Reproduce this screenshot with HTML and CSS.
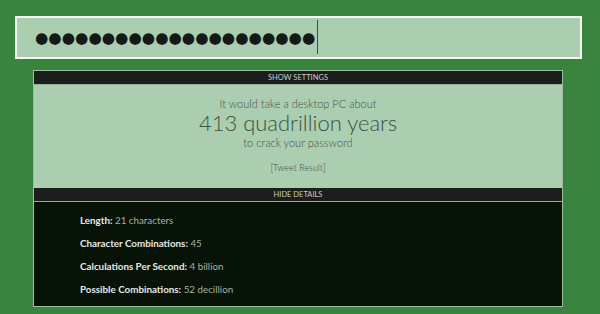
FILE: index.html
```html
<!DOCTYPE html>
<html lang="en">
<head>
  <meta charset="UTF-8">
  <meta name="viewport" content="width=device-width, initial-scale=1.0">
  <title>How Secure Is My Password?</title>
  <link rel="stylesheet" href="styles.css">
</head>
<body>
  <div class="password-box">
    <span class="dots">●●●●●●●●●●●●●●●●●●●●●</span><span class="caret"></span>
  </div>

  <div class="results">
    <div class="bar">Show Settings</div>

    <div class="summary">
      <p class="lead">It would take a desktop PC about</p>
      <p class="time">413 quadrillion years</p>
      <p class="lead">to crack your password</p>
      <p class="tweet">[Tweet Result]</p>
    </div>

    <div class="bar">Hide Details</div>

    <ul class="details">
      <li><strong>Length:</strong> 21 characters</li>
      <li><strong>Character Combinations:</strong> 45</li>
      <li><strong>Calculations Per Second:</strong> 4 billion</li>
      <li><strong>Possible Combinations:</strong> 52 decillion</li>
    </ul>
  </div>
</body>
</html>
```

FILE: styles.css
```css
body {
  margin: 0;
  background-color: #3a8440;
  font-family: 'Lato', 'Open Sans', sans-serif;
}

.password-box {
  display: flex;
  align-items: center;
  width: 563px;
  height: 39px;
  margin: 16px 0 0 15px;
  border: 2px solid #f4f8f4;
  background-color: #abcdb0;
}

.dots {
  margin: 3px 0 0 18px;
  font-family: 'DejaVu Sans', sans-serif;
  font-size: 15.3px;
  line-height: 1;
  color: #151a16;
}

.caret {
  align-self: stretch;
  width: 1px;
  margin: 2px 0 3px 2px;
  background-color: #3d4f40;
}

.results {
  width: 528px;
  margin: 11px 0 0 33px;
  border: 1px solid #9dbfa0;
}

.bar {
  height: 13px;
  line-height: 14px;
  background-color: #1b1e1b;
  border-bottom: 1px solid #98ac98;
  color: #c9cdc9;
  font-size: 7.5px;
  text-align: center;
  text-transform: uppercase;
}

.summary {
  height: 103px;
  box-sizing: border-box;
  padding-top: 11px;
  background-color: #abcdb0;
  text-align: center;
  color: #485249;
  font-weight: 300;
}

.summary p {
  margin: 0;
}

.lead {
  font-size: 11px;
  line-height: 15px;
}

.time {
  font-size: 22px;
  line-height: 24px;
  color: #3e5243;
}

.tweet {
  font-size: 9px;
  line-height: 12px;
  margin-top: 12px !important;
}

.details {
  list-style: none;
  margin: 0;
  height: 104px;
  box-sizing: border-box;
  padding: 11px 0 0 46px;
  background-color: #061306;
  color: #a7b0a8;
  font-size: 9.8px;
}

.details li {
  line-height: 14px;
  margin-bottom: 9px;
}

.details strong {
  color: #e6e8e6;
  font-weight: 700;
}
```
